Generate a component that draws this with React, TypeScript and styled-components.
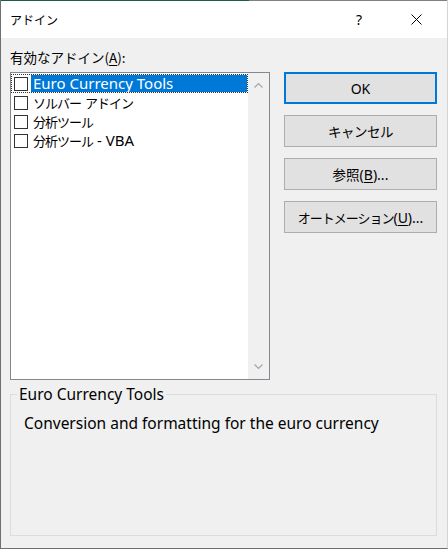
import styled, { createGlobalStyle } from 'styled-components';

const GlobalStyle = createGlobalStyle`
  html, body {
    margin: 0;
    padding: 0;
    background: #f0f0f0;
  }
  * {
    box-sizing: border-box;
  }
`;

const uiFont = `"Noto Sans", "Noto Sans CJK JP", sans-serif`;

const Window = styled.div`
  width: 448px;
  height: 549px;
  background: #f0f0f0;
  border-left: 1px solid #6f6f6f;
  border-right: 1px solid #d4d4d4;
  border-bottom: 1px solid #6f6f6f;
  font-family: ${uiFont};
  color: #000;
  display: flex;
  flex-direction: column;
  overflow: hidden;
`;

const TopEdge = styled.div`
  height: 1px;
  background: linear-gradient(to right, #1d5a4b 0 248px, #808080 248px);
`;

const TitleBar = styled.div`
  height: 37px;
  background: #fff;
  display: flex;
  align-items: center;
  padding-left: 9px;
  padding-right: 8px;
`;

const Title = styled.div`
  flex: 1;
  font-size: 12px;
  font-family: "Noto Sans CJK JP", sans-serif;
`;

const TitleButton = styled.div<{ $gap?: number }>`
  width: 46px;
  height: 37px;
  margin-right: ${(p) => p.$gap ?? 0}px;
  display: flex;
  align-items: center;
  justify-content: center;
  font-size: 14px;
`;

const Body = styled.div`
  padding: 11px 10px 0 9px;
  display: grid;
  grid-template-columns: 260px 153px;
  column-gap: 14px;
  row-gap: 7px;
`;

const FieldLabel = styled.div`
  grid-column: 1 / span 2;
  font-size: 13.5px;
  line-height: 16px;
  font-family: "Noto Sans CJK JP", sans-serif;
`;

const Mnemonic = styled.span`
  text-decoration: underline;
  text-underline-offset: 2px;
`;

// Japanese runs are squeezed a little so they keep the width of the original UI font
const Jp = styled.span<{ $size: number; $squeeze?: number }>`
  font-family: "Noto Sans CJK JP", sans-serif;
  font-size: ${(p) => p.$size}px;
  letter-spacing: ${(p) => -(p.$squeeze ?? 0)}px;
`;

const ListBox = styled.div`
  height: 308px;
  border: 1px solid #828790;
  background: #fff;
  display: flex;
`;

const Items = styled.div`
  flex: 1;
  padding-top: 1px;
`;

const Row = styled.div<{ $focused?: boolean }>`
  height: 19px;
  display: flex;
  align-items: center;
  outline: ${(p) => (p.$focused ? '1px dotted #333' : 'none')};
  outline-offset: -1px;
`;

const CheckBox = styled.div`
  width: 14px;
  height: 14px;
  margin-left: 3px;
  border: 1px solid #333;
  background: #fff;
  flex: none;
`;

const ItemText = styled.div<{ $selected?: boolean }>`
  margin-left: 3px;
  margin-right: 1px;
  padding: 0 2px;
  height: 17px;
  line-height: 17px;
  font-size: 15px;
  white-space: pre;
  flex: ${(p) => (p.$selected ? 1 : 'none')};
  background: ${(p) => (p.$selected ? '#0078d7' : 'transparent')};
  color: ${(p) => (p.$selected ? '#fff' : '#000')};
`;

const ScrollBar = styled.div`
  width: 21px;
  background: #f0f0f0;
  display: flex;
  flex-direction: column;
  justify-content: space-between;
  align-items: center;
  padding: 9px 0 9px;
`;

const Buttons = styled.div`
  display: flex;
  flex-direction: column;
  gap: 11px;
`;

const Button = styled.button<{ $default?: boolean }>`
  height: 32px;
  width: 100%;
  background: #e1e1e1;
  border: ${(p) => (p.$default ? '2px solid #0078d7' : '1px solid #adadad')};
  font-family: ${uiFont};
  font-size: 14px;
  color: #000;
  padding: 0;
  text-align: center;
  white-space: pre;
`;

const Group = styled.fieldset`
  grid-column: 1 / span 2;
  margin: -2px 0 0;
  height: 151px;
  padding: 0;
  border: 1px solid #dcdcdc;
  min-width: 0;
`;

const Legend = styled.legend`
  margin-left: 6px;
  padding: 0 2px;
  font-size: 15.5px;
  line-height: 18px;
`;

const Description = styled.div`
  margin-top: 10px;
  padding-left: 13px;
  font-size: 15.5px;
  line-height: 20px;
`;

const cjkRun = /([\u3000-\u30ff\u4e00-\u9fff\uff00-\uffef]+)/;

const Mixed = ({ text, size, squeeze }: { text: string; size: number; squeeze: number }) => (
  <>
    {text.split(cjkRun).map((part, i) =>
      cjkRun.test(part) ? (
        <Jp key={i} $size={size} $squeeze={squeeze}>
          {part}
        </Jp>
      ) : (
        part
      )
    )}
  </>
);

const Chevron = ({ up }: { up?: boolean }) => (
  <svg width="9" height="6" viewBox="0 0 9 6">
    <path
      d={up ? 'M0.5 5.5 L4.5 1.5 L8.5 5.5' : 'M0.5 0.5 L4.5 4.5 L8.5 0.5'}
      fill="none"
      stroke="#a6a6a6"
      strokeWidth="1.2"
    />
  </svg>
);

const CloseIcon = () => (
  <svg width="11" height="11" viewBox="0 0 11 11">
    <path d="M0.5 0.5 L10.5 10.5 M10.5 0.5 L0.5 10.5" stroke="#000" strokeWidth="1" />
  </svg>
);

const addins = ['Euro Currency Tools', 'ソルバー アドイン', '分析ツール', '分析ツール - VBA'];

export default function App() {
  return (
    <>
      <GlobalStyle />
      <Window>
        <TopEdge />
        <TitleBar>
          <Title>アドイン</Title>
          <TitleButton $gap={11}>?</TitleButton>
          <TitleButton>
            <CloseIcon />
          </TitleButton>
        </TitleBar>
        <Body>
          <FieldLabel>
            有効なアドイン(<Mnemonic>A</Mnemonic>):
          </FieldLabel>
          <ListBox>
            <Items>
              {addins.map((name, i) => (
                <Row key={name} $focused={i === 0}>
                  <CheckBox />
                  <ItemText $selected={i === 0}>
                    <Mixed text={name} size={13} squeeze={1} />
                  </ItemText>
                </Row>
              ))}
            </Items>
            <ScrollBar>
              <Chevron up />
              <Chevron />
            </ScrollBar>
          </ListBox>
          <Buttons>
            <Button $default>OK</Button>
            <Button>
              <Jp $size={13.5} $squeeze={0.5}>キャンセル</Jp>
            </Button>
            <Button>
              <Jp $size={13.5}>参照</Jp>(<Mnemonic>B</Mnemonic>)...
            </Button>
            <Button>
              <Jp $size={13} $squeeze={1}>オートメーション</Jp>(<Mnemonic>U</Mnemonic>)...
            </Button>
          </Buttons>
          <Group>
            <Legend>Euro Currency Tools</Legend>
            <Description>Conversion and formatting for the euro currency</Description>
          </Group>
        </Body>
      </Window>
    </>
  );
}
